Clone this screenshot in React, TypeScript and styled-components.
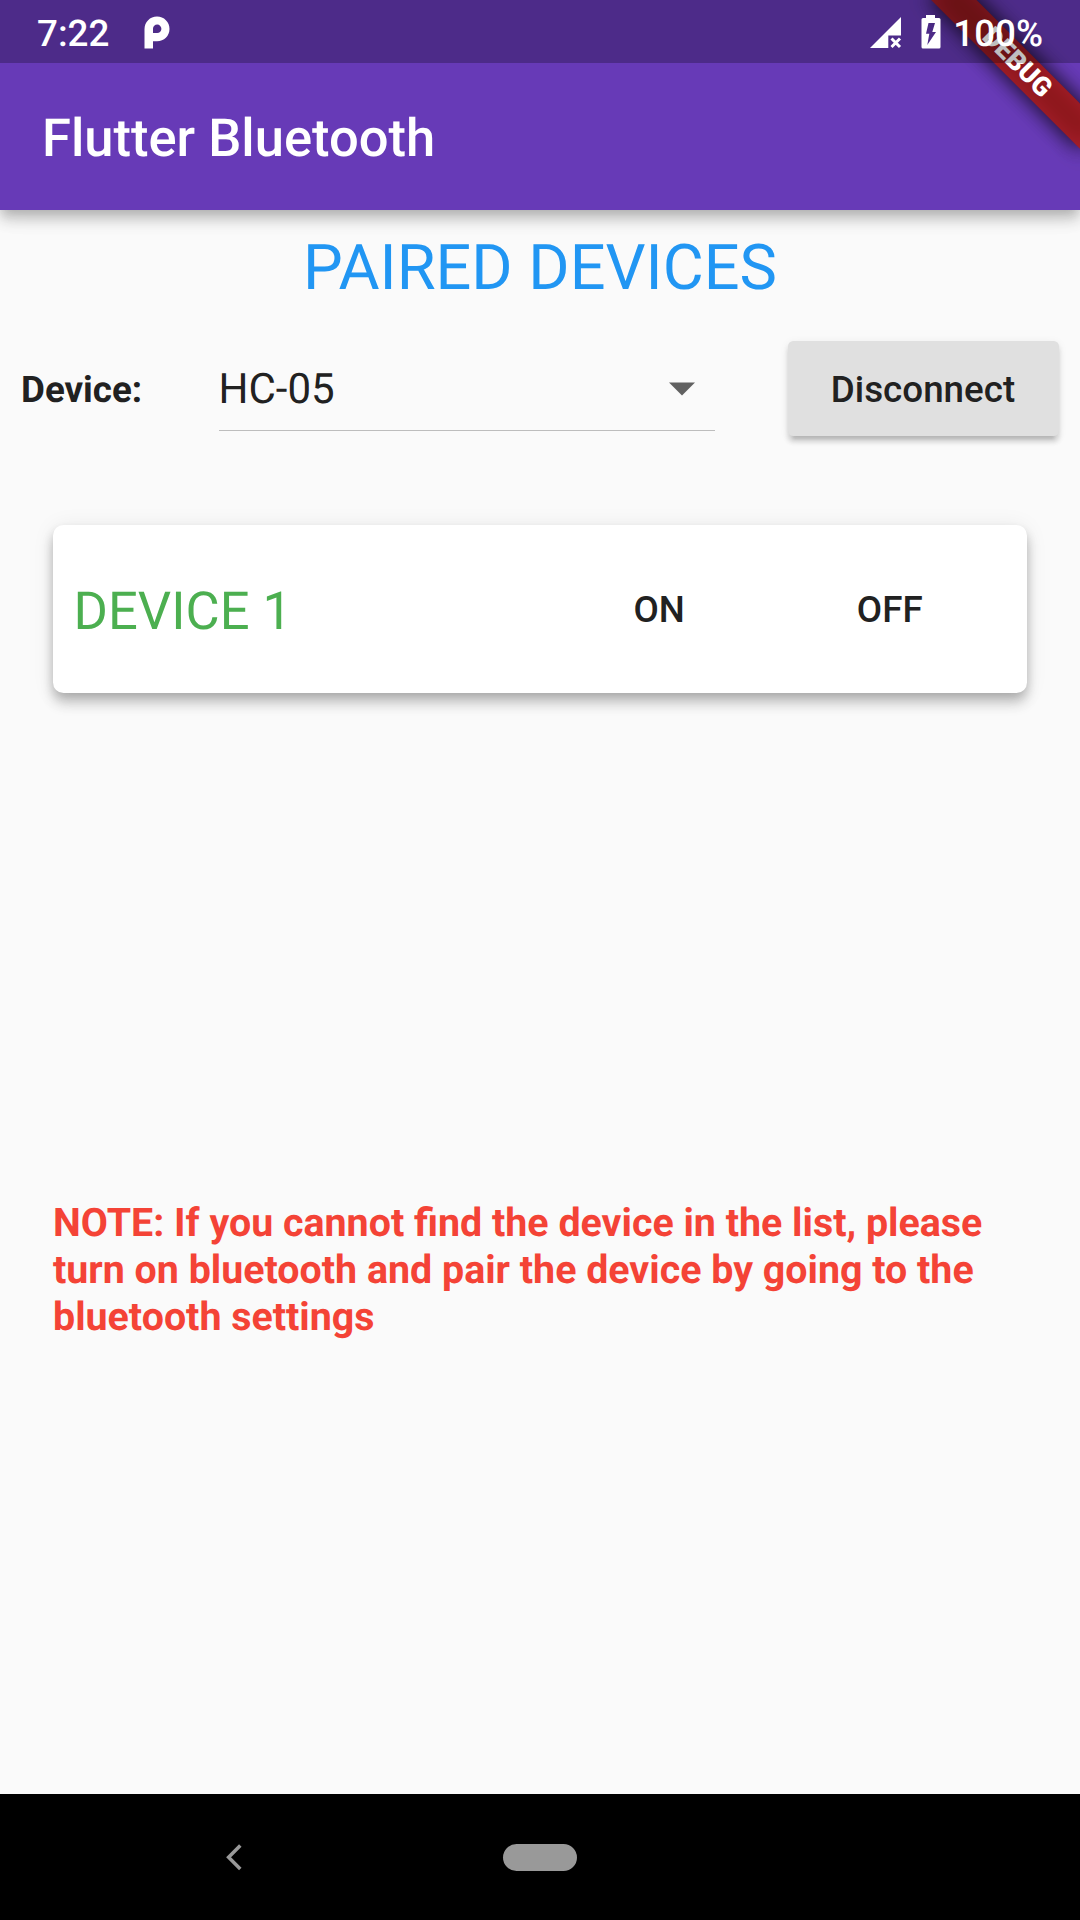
import React from "react";
import styled, { createGlobalStyle } from "styled-components";

const GlobalStyle = createGlobalStyle`
  body {
    margin: 0;
    background: #fafafa;
    font-family: Roboto, "Liberation Sans", sans-serif;
    text-rendering: geometricPrecision;
  }
  * { box-sizing: border-box; }
`;

const Screen = styled.div`
  position: relative;
  display: flex;
  flex-direction: column;
  width: 1080px;
  height: 1920px;
  overflow: hidden;
  background: #fafafa;
`;

const StatusBar = styled.div`
  position: absolute;
  inset: 0 0 auto 0;
  z-index: 3;
  height: 63px;
  display: flex;
  align-items: center;
  padding: 2px 37px 0 37px;
  background: rgba(0, 0, 0, 0.25);
  color: #fff;
  font-size: 36.75px;
  font-weight: 500;
  line-height: 43px;
`;

const StatusIcon = styled.svg<{ $gap: number }>`
  display: block;
  flex: none;
  margin-left: ${(p) => p.$gap}px;
`;

const StatusRight = styled.div`
  display: flex;
  align-items: center;
  margin-left: auto;
`;

const StatusText = styled.span<{ $gap?: number }>`
  margin-left: ${(p) => p.$gap ?? 0}px;
  padding-top: 1px;
`;

const BatteryIcon = styled(StatusIcon)`
  margin-bottom: 2px;
`;

const AppBar = styled.header`
  position: relative;
  z-index: 1;
  flex: none;
  height: 210px;
  padding: 65px 42px 0;
  display: flex;
  align-items: center;
  background: #673ab7;
  box-shadow: 0 5.25px 10.5px -2.6px rgba(0, 0, 0, 0.16),
    0 10.5px 13.1px rgba(0, 0, 0, 0.14), 0 2.6px 26.25px rgba(0, 0, 0, 0.08);
`;

const AppTitle = styled.h1`
  margin: 0;
  color: #fff;
  font-size: 52.5px;
  font-weight: 500;
  line-height: 62px;
`;

const DebugBanner = styled.div`
  position: absolute;
  z-index: 2;
  left: 911.9px;
  top: 47.4px;
  display: grid;
  width: 210px;
  height: 31.5px;
  transform: rotate(45deg);

  > * {
    grid-area: 1 / 1;
    z-index: 0;
  }
`;

const BannerShadow = styled.span`
  background: rgba(0, 0, 0, 0.5);
  filter: blur(10.4px);
`;

const BannerFill = styled.span`
  background: rgba(183, 28, 28, 0.63);
`;

const BannerText = styled.span`
  color: #fff;
  text-align: center;
  font-size: 26.78px;
  font-weight: 900;
  line-height: 31.5px;
`;

const Body = styled.main`
  flex: 1;
  display: flex;
  flex-direction: column;
`;

const SectionTitle = styled.h2`
  margin: 22px 0 20px;
  color: #2196f3;
  text-align: center;
  font-size: 63px;
  font-weight: 400;
  line-height: 74px;
`;

const DeviceRow = styled.div`
  display: flex;
  align-items: center;
  justify-content: space-between;
  padding: 15px 21px 0;
  height: 110px;
`;

const Label = styled.span`
  width: 124px;
  padding-top: 2px;
  color: #212121;
  font-size: 36.75px;
  font-weight: 700;
  line-height: 44px;
`;

const Dropdown = styled.div`
  display: flex;
  align-items: center;
  justify-content: space-between;
  width: 496px;
  height: 84px;
  padding: 2px 18.5px 0 0;
  border-bottom: 1px solid #bdbdbd;
  color: #212121;
  font-size: 42px;
  line-height: 49px;
`;

const RaisedButton = styled.button`
  width: 271px;
  height: 94.5px;
  padding: 1px 1px 0 0;
  border: 0;
  border-radius: 5.25px;
  background: #e0e0e0;
  color: #212121;
  font: 500 36.75px/43px Roboto, "Liberation Sans", sans-serif;
  box-shadow: 0 7.9px 2.6px -5.25px rgba(0, 0, 0, 0.1),
    0 5.25px 5.25px rgba(0, 0, 0, 0.14), 0 2.6px 10px rgba(0, 0, 0, 0.07);
`;

const Card = styled.section`
  display: flex;
  align-items: center;
  height: 168px;
  margin: 89px 53px 0 52.5px;
  padding: 0 22px 0 21px;
  border-radius: 10.5px;
  background: #fff;
  box-shadow: 0 5.25px 10.5px -2.6px rgba(0, 0, 0, 0.18),
    0 10.5px 13.1px rgba(0, 0, 0, 0.16), 0 2.6px 22px rgba(0, 0, 0, 0.08);
`;

const DeviceName = styled.span`
  flex: 1;
  padding-top: 3px;
  color: #4caf50;
  font-size: 52.5px;
  line-height: 62px;
`;

const FlatButton = styled.button`
  width: 230.5px;
  height: 94.5px;
  padding: 0;
  border: 0;
  background: transparent;
  color: #212121;
  font: 500 36.75px/43px Roboto, "Liberation Sans", sans-serif;
`;

const Note = styled.p`
  margin: 506px 52px 0 53px;
  color: #f44336;
  font-size: 39.375px;
  font-weight: 700;
  line-height: 47px;
`;

const NavBar = styled.nav`
  flex: none;
  height: 126px;
  display: grid;
  grid-template-columns: 467px 146px 467px;
  align-items: center;
  justify-items: center;
  background: #000;
`;

const HomePill = styled.span`
  width: 74px;
  height: 27px;
  border-radius: 14px;
  background: #999;
`;

const App = () => (
  <>
    <GlobalStyle />
    <Screen>
      <StatusBar>
        <StatusText>7:22</StatusText>
        <StatusIcon $gap={35} width="26" height="33" viewBox="0 0 26 33">
          <path
            fill="#fff"
            fillRule="evenodd"
            d="M.5 32.500V13C.5 6 6 .5 13 .5S25.500 6 25.500 13 20 25.200 13 25.200H9V32.500ZM9 17h4a4.200 4.200 0 1 0-4-4.200Z"
          />
        </StatusIcon>
        <StatusRight>
          <StatusIcon $gap={0} width="32" height="32" viewBox="0 0 32 32">
            <path fill="#fff" d="M0 31 31 0V18.500H18.300V31Z" />
            <path stroke="#fff" strokeWidth="3" d="m21.500 21.500 8.500 8.500m0-8.500-8.500 8.500" />
          </StatusIcon>
          <BatteryIcon $gap={19} width="20" height="34" viewBox="0 0 20 34">
            <path
              fill="#fff"
              fillRule="evenodd"
              d="M5 0h9v3h4q1.500 0 1.500 1.500v27.500q0 1.500-1.500 1.500H2q-1.500 0-1.500-1.500V4.500Q.5 3 2 3h3ZM7.500 8 5 18.700h3.300L6.300 30 15 17h-3.700L14 8Z"
            />
          </BatteryIcon>
          <StatusText $gap={12.5}>100%</StatusText>
        </StatusRight>
      </StatusBar>
      <AppBar>
        <AppTitle>Flutter Bluetooth</AppTitle>
      </AppBar>
      <DebugBanner>
        <BannerShadow />
        <BannerFill />
        <BannerShadow />
        <BannerFill />
        <BannerText>DEBUG</BannerText>
      </DebugBanner>
      <Body>
        <SectionTitle>PAIRED DEVICES</SectionTitle>
        <DeviceRow>
          <Label>Device:</Label>
          <Dropdown>
            <span>HC-05</span>
            <svg width="27" height="14" viewBox="0 0 27 14">
              <path d="M0 .5h26L13 13.500Z" fill="#616161" />
            </svg>
          </Dropdown>
          <RaisedButton>Disconnect</RaisedButton>
        </DeviceRow>
        <Card>
          <DeviceName>DEVICE 1</DeviceName>
          <FlatButton>ON</FlatButton>
          <FlatButton>OFF</FlatButton>
        </Card>
        <Note>
          NOTE: If you cannot find the device in the list, please turn on bluetooth and pair the
          device by going to the bluetooth settings
        </Note>
      </Body>
      <NavBar>
        <svg width="16" height="27" viewBox="0 0 16 27">
          <path d="M14.300 1.500 2.600 13.300 14.300 25" fill="none" stroke="#999" strokeWidth="3.500" />
        </svg>
        <HomePill />
      </NavBar>
    </Screen>
  </>
);

export default App;
